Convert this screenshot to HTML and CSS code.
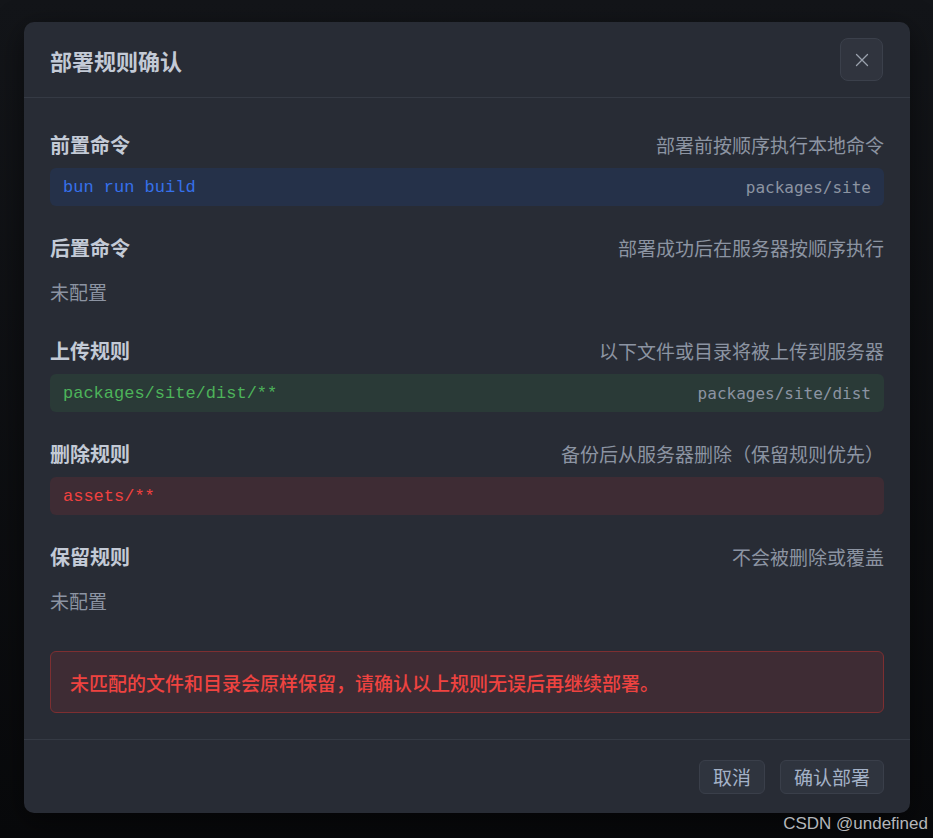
FILE: index.html
```html
<!DOCTYPE html>
<html lang="zh-CN">
<head>
    <meta charset="UTF-8">
    <title>部署规则确认</title>
    <link rel="stylesheet" href="styles.css">
</head>
<body>
<div class="dialog">
    <div class="dialog_head">
        <h2 class="dialog_title">部署规则确认</h2>
        <button class="close_btn" type="button">
            <svg width="14" height="14" viewBox="0 0 14 14">
                <path d="M1.5 1.5 L12.5 12.5 M12.5 1.5 L1.5 12.5" stroke="#9aa1ad" stroke-width="1.3" fill="none" stroke-linecap="round"/>
            </svg>
        </button>
    </div>

    <div class="dialog_body">
        <div class="rule">
            <div class="rule_head">
                <span class="rule_name">前置命令</span>
                <span class="rule_desc">部署前按顺序执行本地命令</span>
            </div>
            <div class="code_box blue">
                <span class="code">bun run build</span>
                <span class="code_dir">packages/site</span>
            </div>
        </div>

        <div class="rule">
            <div class="rule_head">
                <span class="rule_name">后置命令</span>
                <span class="rule_desc">部署成功后在服务器按顺序执行</span>
            </div>
            <div class="empty">未配置</div>
        </div>

        <div class="rule">
            <div class="rule_head">
                <span class="rule_name">上传规则</span>
                <span class="rule_desc">以下文件或目录将被上传到服务器</span>
            </div>
            <div class="code_box green">
                <span class="code">packages/site/dist/**</span>
                <span class="code_dir">packages/site/dist</span>
            </div>
        </div>

        <div class="rule">
            <div class="rule_head">
                <span class="rule_name">删除规则</span>
                <span class="rule_desc">备份后从服务器删除（保留规则优先）</span>
            </div>
            <div class="code_box red">
                <span class="code">assets/**</span>
            </div>
        </div>

        <div class="rule">
            <div class="rule_head">
                <span class="rule_name">保留规则</span>
                <span class="rule_desc">不会被删除或覆盖</span>
            </div>
            <div class="empty">未配置</div>
        </div>

        <div class="warning">未匹配的文件和目录会原样保留，请确认以上规则无误后再继续部署。</div>
    </div>

    <div class="dialog_foot">
        <button class="btn" type="button">取消</button>
        <button class="btn" type="button">确认部署</button>
    </div>
</div>

<div class="watermark">CSDN @undefined</div>
</body>
</html>
```

FILE: styles.css
```css
* {
    margin: 0;
    padding: 0;
    box-sizing: border-box;
}

body {
    height: 838px;
    padding: 22px 23px 0 24px;
    background: linear-gradient(#131519, #08090b);
    font-family: "Noto Sans CJK SC", "Noto Sans", sans-serif;
    position: relative;
    overflow: hidden;
}

.dialog {
    width: 886px;
    height: 791px;
    background-color: #282c35;
    border-radius: 10px;
    box-shadow: 0 8px 30px rgba(0, 0, 0, 0.5);
    display: flex;
    flex-direction: column;
}

.dialog_head {
    height: 77px;
    padding: 0 26px;
    border-bottom: 1px solid #353a44;
    display: flex;
    align-items: center;
    justify-content: space-between;
}

.dialog_title {
    font-size: 22px;
    font-weight: 700;
    color: #c3cad6;
}

.close_btn {
    width: 43px;
    height: 43px;
    border-radius: 8px;
    background-color: #30343e;
    border: 1px solid #3b404b;
    display: flex;
    align-items: center;
    justify-content: center;
    margin-right: 1px;
}

.dialog_body {
    padding: 33px 26px 26px;
    display: flex;
    flex-direction: column;
    gap: 28px;
}

.rule_head {
    height: 26px;
    margin-bottom: 11px;
    display: flex;
    align-items: center;
    justify-content: space-between;
}

.rule_name {
    font-size: 20px;
    font-weight: 700;
    color: #c3cad6;
}

.rule_desc {
    font-size: 19px;
    color: #8c94a2;
}

.code_box {
    height: 38px;
    padding: 0 13px;
    border-radius: 6px;
    display: flex;
    align-items: center;
    justify-content: space-between;
}

.code {
    font-family: "Liberation Mono", "DejaVu Sans Mono", monospace;
    font-size: 17px;
}

.code_dir {
    font-family: "DejaVu Sans Mono", "Liberation Mono", monospace;
    font-size: 16px;
    color: #8c94a2;
}

.blue {
    background-color: #253149;
}

.blue .code {
    color: #3670ea;
}

.green {
    background-color: #2a3a37;
}

.green .code {
    color: #4db35a;
}

.red {
    background-color: #3e2c34;
}

.red .code {
    color: #f0413f;
}

.empty {
    height: 38px;
    padding-top: 4px;
    line-height: 34px;
    font-size: 19px;
    color: #8c94a2;
}

.warning {
    margin-top: 5px;
    height: 62px;
    padding: 0 19px;
    display: flex;
    align-items: center;
    background-color: #3e2c34;
    border: 1px solid #7d2f31;
    border-radius: 6px;
    font-size: 19px;
    font-weight: 500;
    color: #ef4340;
}

.dialog_foot {
    margin-top: auto;
    height: 74px;
    padding: 0 26px;
    border-top: 1px solid #353a44;
    display: flex;
    align-items: center;
    justify-content: flex-end;
    gap: 15px;
}

.btn {
    height: 34px;
    padding: 0 13px;
    background-color: #2f343e;
    border: 1px solid #3a3f4a;
    border-radius: 6px;
    font-family: "Noto Sans CJK SC", "Noto Sans", sans-serif;
    font-size: 19px;
    color: #a4b2c8;
}

.watermark {
    position: absolute;
    right: 5px;
    bottom: 4px;
    font-family: "Liberation Sans", Arial, sans-serif;
    font-size: 17px;
    color: #b4b6ba;
}
```
